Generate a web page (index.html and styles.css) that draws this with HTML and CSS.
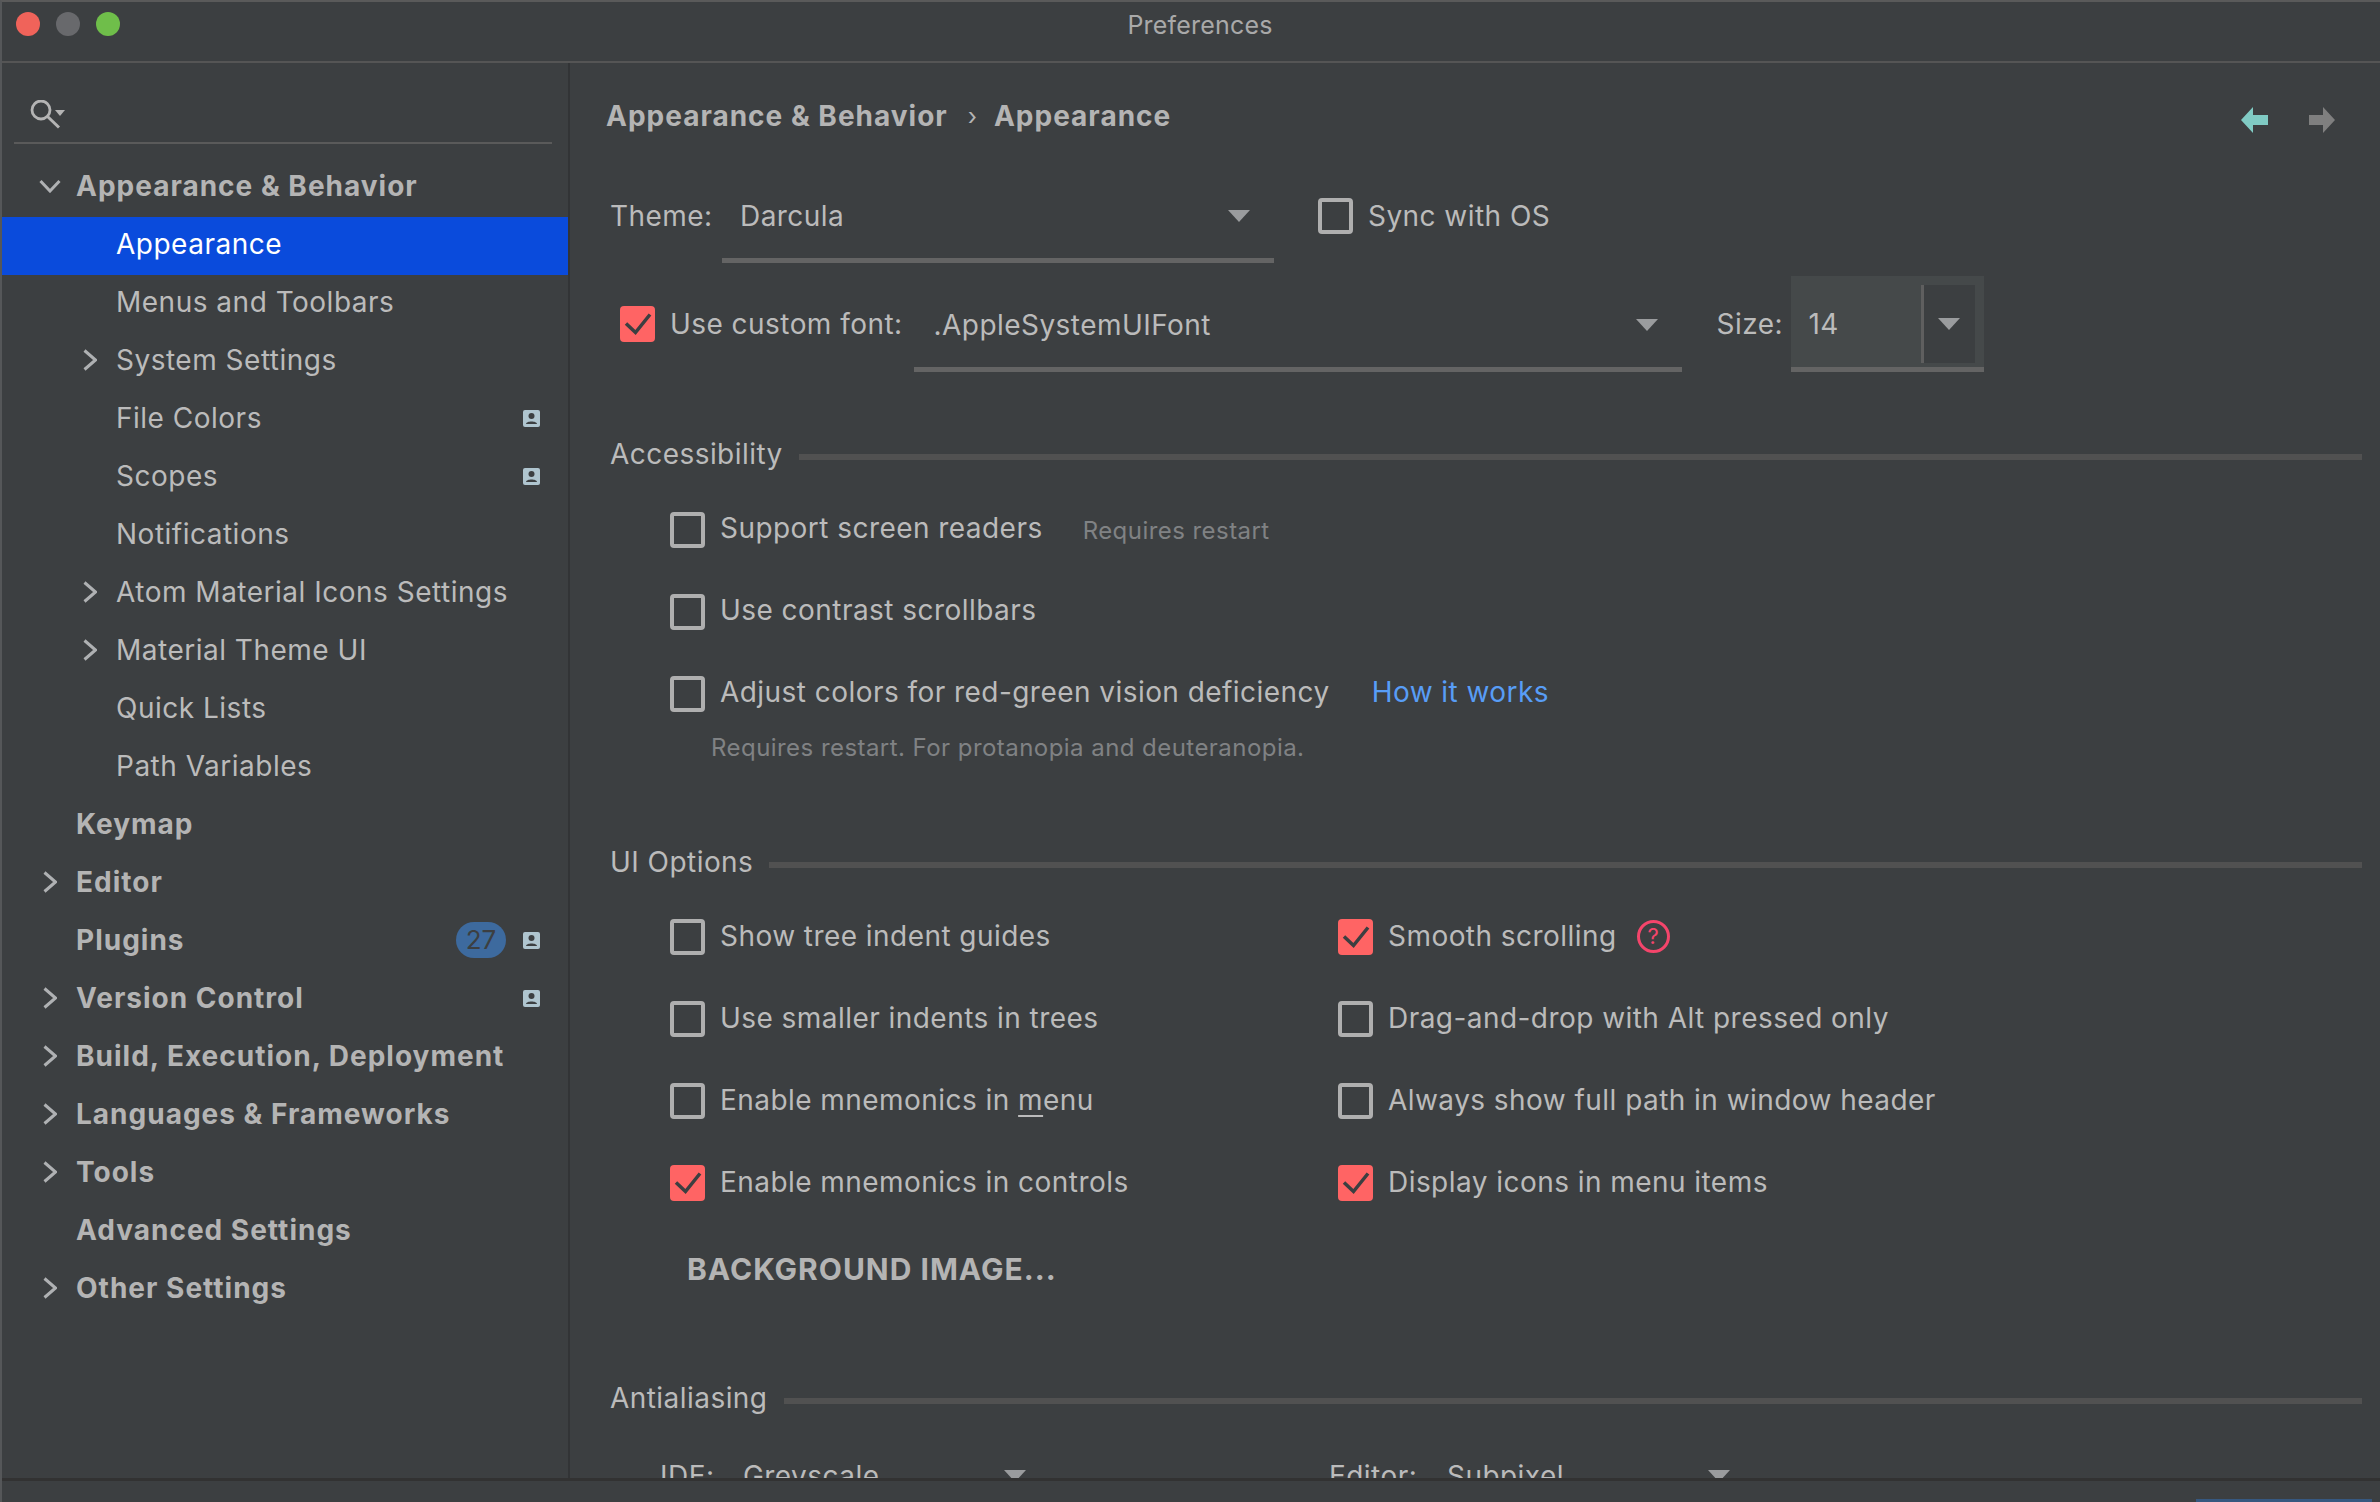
FILE: index.html
```html
<!DOCTYPE html>
<html lang="en">
<head>
    <meta charset="UTF-8">
    <title>Preferences</title>
    <link rel="stylesheet" href="styles.css">
</head>
<body>
    <svg class="defs" width="0" height="0">
        <symbol id="chev-right" viewBox="0 0 14 22"><path d="M1.500 1.500 L12.500 11 L1.500 20.500" fill="none" stroke="currentColor" stroke-width="3"/></symbol>
        <symbol id="chev-down" viewBox="0 0 22 14"><path d="M1.5 2 L11 12 L20.5 2" fill="none" stroke="currentColor" stroke-width="3"/></symbol>
        <symbol id="person" viewBox="0 0 17 17"><rect width="17" height="17" rx="2" fill="#afc5cf"/><circle cx="8.5" cy="6" r="3" fill="#3c3f41"/><path d="M3 14 C3 10.500 14 10.500 14 14 Z" fill="#3c3f41"/></symbol>
        <symbol id="tick" viewBox="0 0 35 36"><path d="M6 17.500 L15.500 26.500 L30 8.500" fill="none" stroke="#3c3f41" stroke-width="3.500"/></symbol>
    </svg>

    <div class="window">
        <div class="titlebar">
            <div class="lights">
                <span class="light red"></span>
                <span class="light grey"></span>
                <span class="light green"></span>
            </div>
            <span class="title">Preferences</span>
        </div>

        <div class="panes">
            <aside class="sidebar">
                <div class="search">
                    <svg width="37" height="30" viewBox="0 0 37 30">
                        <circle cx="12" cy="10" r="9" fill="none" stroke="#b4b4b4" stroke-width="2.800"/>
                        <path d="M18 16 L30 27.500" stroke="#b4b4b4" stroke-width="3"/>
                        <path d="M26 10 H36 L31 16 Z" fill="#b4b4b4"/>
                    </svg>
                </div>
                <ul class="tree">
                    <li class="top"><svg class="chev-d"><use href="#chev-down"/></svg>Appearance &amp; Behavior</li>
                    <li class="sub selected">Appearance</li>
                    <li class="sub">Menus and Toolbars</li>
                    <li class="sub"><svg class="chev"><use href="#chev-right"/></svg>System Settings</li>
                    <li class="sub">File Colors<svg class="person"><use href="#person"/></svg></li>
                    <li class="sub">Scopes<svg class="person"><use href="#person"/></svg></li>
                    <li class="sub">Notifications</li>
                    <li class="sub"><svg class="chev"><use href="#chev-right"/></svg>Atom Material Icons Settings</li>
                    <li class="sub"><svg class="chev"><use href="#chev-right"/></svg>Material Theme UI</li>
                    <li class="sub">Quick Lists</li>
                    <li class="sub">Path Variables</li>
                    <li class="top">Keymap</li>
                    <li class="top"><svg class="chev"><use href="#chev-right"/></svg>Editor</li>
                    <li class="top">Plugins<span class="badge">27</span><svg class="person"><use href="#person"/></svg></li>
                    <li class="top"><svg class="chev"><use href="#chev-right"/></svg>Version Control<svg class="person"><use href="#person"/></svg></li>
                    <li class="top"><svg class="chev"><use href="#chev-right"/></svg>Build, Execution, Deployment</li>
                    <li class="top"><svg class="chev"><use href="#chev-right"/></svg>Languages &amp; Frameworks</li>
                    <li class="top"><svg class="chev"><use href="#chev-right"/></svg>Tools</li>
                    <li class="top">Advanced Settings</li>
                    <li class="top"><svg class="chev"><use href="#chev-right"/></svg>Other Settings</li>
                </ul>
            </aside>

            <main class="content">
                <div class="crumbs">
                    <span>Appearance &amp; Behavior</span>
                    <span class="crumb-sep">›</span>
                    <span>Appearance</span>
                    <div class="nav-arrows">
                        <svg width="27" height="26" viewBox="0 0 27 26"><path d="M0 13 L12 0 V8 H27 V18 H12 V26 Z" fill="#80cbc4"/></svg>
                        <svg width="26" height="26" viewBox="0 0 26 26"><path d="M26 13 L14 0 V8 H0 V18 H14 V26 Z" fill="#7f7f7f"/></svg>
                    </div>
                </div>

                <div class="theme-row">
                    <span class="field-label">Theme:</span>
                    <div class="combo theme-combo"><span>Darcula</span><i class="arrow"></i></div>
                    <label class="check sync"><i class="box"></i>Sync with OS</label>
                </div>

                <div class="font-row">
                    <label class="check"><i class="box on"><svg><use href="#tick"/></svg></i>Use custom font:</label>
                    <div class="combo font-combo"><span>.AppleSystemUIFont</span><i class="arrow"></i></div>
                    <span class="size-label">Size:</span>
                    <div class="size-box">
                        <span class="size-value">14</span>
                        <div class="size-btn"><i class="arrow"></i></div>
                    </div>
                </div>

                <div class="section-head access-head"><span>Accessibility</span><i class="rule"></i></div>
                <div class="checks">
                    <label class="check"><i class="box"></i>Support screen readers<span class="hint">Requires restart</span></label>
                    <label class="check"><i class="box"></i>Use contrast scrollbars</label>
                    <label class="check"><i class="box"></i>Adjust colors for red-green vision deficiency<a class="link">How it works</a></label>
                </div>
                <p class="note">Requires restart. For protanopia and deuteranopia.</p>

                <div class="section-head ui-head"><span>UI Options</span><i class="rule"></i></div>
                <div class="options">
                    <label class="check"><i class="box"></i>Show tree indent guides</label>
                    <label class="check"><i class="box on"><svg><use href="#tick"/></svg></i>Smooth scrolling<span class="help">?</span></label>
                    <label class="check"><i class="box"></i>Use smaller indents in trees</label>
                    <label class="check"><i class="box"></i>Drag-and-drop with Alt pressed only</label>
                    <label class="check"><i class="box"></i><span>Enable mnemonics in <u>m</u>enu</span></label>
                    <label class="check"><i class="box"></i>Always show full path in window header</label>
                    <label class="check"><i class="box on"><svg><use href="#tick"/></svg></i>Enable mnemonics in controls</label>
                    <label class="check"><i class="box on"><svg><use href="#tick"/></svg></i>Display icons in menu items</label>
                </div>
                <div class="bg-button">BACKGROUND IMAGE...</div>

                <div class="section-head aa-head"><span>Antialiasing</span><i class="rule"></i></div>
                <div class="aa-row">
                    <span class="aa-label">IDE:</span><span class="aa-value">Greyscale</span><i class="arrow"></i>
                    <span class="aa-label editor">Editor:</span><span class="aa-value">Subpixel</span><i class="arrow"></i>
                </div>
            </main>
        </div>

        <div class="footer"><div class="ok-button"></div></div>
    </div>
</body>
</html>
```

FILE: styles.css
```css
* {
    box-sizing: border-box;
}

html, body {
    margin: 0;
    height: 100%;
    overflow: hidden;
}

body {
    font-family: Inter, "Noto Sans", sans-serif;
    font-size: 28px;
    color: #bbbbbb;
    background-color: #3c3f41;
}

.defs {
    position: absolute;
}

i {
    display: block;
}

.window {
    height: 1502px;
    display: flex;
    flex-direction: column;
    border-top: 2px solid #5a5a5a;
    border-left: 2px solid #555759;
}

/* title bar */
.titlebar {
    height: 61px;
    flex: none;
    display: flex;
    align-items: center;
    position: relative;
    border-bottom: 2px solid #555555;
    padding-bottom: 16px;
}

.lights {
    display: flex;
    gap: 16px;
    margin-left: 14px;
}

.light {
    width: 24px;
    height: 24px;
    border-radius: 50%;
}

.red { background-color: #f0635a; }
.grey { background-color: #68696c; }
.green { background-color: #6fbe4a; }

.title {
    position: absolute;
    left: 18px;
    right: 0;
    top: 9px;
    text-align: center;
    font-size: 25px;
    line-height: 28px;
    letter-spacing: 0.2px;
    color: #a9a9a9;
}

.panes {
    flex: 1;
    display: flex;
    min-height: 0;
}

/* sidebar */
.sidebar {
    width: 566px;
    flex: none;
    border-right: 2px solid #323436;
    box-sizing: content-box;
}

.search {
    height: 81px;
    margin: 0 16px 0 12px;
    padding: 37px 0 0 15px;
    border-bottom: 2px solid #5a5a5a;
}

.tree {
    list-style: none;
    margin: 15px 0 0;
    padding: 0;
}

.tree li {
    height: 58px;
    display: flex;
    align-items: center;
    position: relative;
    padding-right: 16px;
    padding-bottom: 4px;
    letter-spacing: 0.5px;
}

.tree .top {
    padding-left: 74px;
    font-weight: 700;
    letter-spacing: 1px;
    color: #b4b4b4;
}

.tree .sub {
    padding-left: 114px;
}

.tree .selected {
    background-color: #0a4bdc;
    color: #ffffff;
}

.chev {
    width: 14px;
    height: 22px;
    position: absolute;
    color: #afb1b3;
    left: 41px;
}

.sub .chev {
    left: 81px;
}

.chev-d {
    width: 22px;
    height: 14px;
    position: absolute;
    left: 37px;
    color: #afb1b3;
}

.person {
    width: 17px;
    height: 17px;
    position: absolute;
    left: 521px;
}

.badge {
    position: absolute;
    left: 454px;
    width: 50px;
    height: 36px;
    border-radius: 18px;
    background-color: #3d6a9e;
    color: #3c3f41;
    font-weight: 400;
    font-size: 26px;
    line-height: 36px;
    text-align: center;
    letter-spacing: 0;
}

/* main pane */
.content {
    flex: 1;
    min-width: 0;
    overflow: hidden;
    padding-right: 18px;
    letter-spacing: 0.45px;
}

.crumbs {
    height: 106px;
    display: flex;
    align-items: center;
    padding-left: 36px;
    font-weight: 700;
    letter-spacing: 1px;
    color: #b4b4b4;
}

.crumb-sep {
    margin: 0 16px 0 20px;
    font-weight: 400;
    font-size: 24px;
}

.nav-arrows {
    margin-left: auto;
    display: flex;
    gap: 41px;
    padding-right: 27px;
    padding-top: 8px;
}

.theme-row {
    height: 94px;
    display: flex;
    align-items: center;
    padding-left: 40px;
}

.field-label {
    width: 112px;
}

.combo {
    align-self: flex-end;
    display: flex;
    align-items: center;
    justify-content: space-between;
    border-bottom: 5px solid #646464;
    padding-top: 3px;
}

.theme-combo {
    width: 552px;
    height: 93px;
    padding-left: 18px;
    padding-right: 24px;
}

.arrow {
    width: 0;
    height: 0;
    border-left: 11px solid transparent;
    border-right: 11px solid transparent;
    border-top: 12px solid #9a9c9e;
}

.check {
    display: flex;
    align-items: flex-start;
    height: 36px;
    line-height: 33px;
    white-space: nowrap;
}

.theme-row .check, .font-row .check {
    line-height: 36px;
}

.box {
    width: 35px;
    height: 36px;
    flex: none;
    margin-right: 15px;
    border: 4px solid #afafaf;
    border-radius: 4px;
}

.box.on {
    background-color: #ff6464;
    border: none;
}

.box svg {
    width: 35px;
    height: 36px;
    display: block;
}

.sync {
    margin-left: 44px;
}

.font-row {
    height: 96px;
    margin-top: 13px;
    display: flex;
    align-items: center;
    padding-left: 50px;
}

.font-combo {
    width: 768px;
    height: 92px;
    margin-left: 11px;
    padding-left: 20px;
    padding-right: 24px;
}

.size-label {
    margin-left: 35px;
    width: 74px;
}

.size-box {
    align-self: stretch;
    width: 193px;
    background-color: #45494a;
    border-bottom: 5px solid #646464;
    display: flex;
    align-items: center;
    justify-content: space-between;
    padding: 9px 9px 4px 18px;
}

.size-btn {
    width: 54px;
    align-self: stretch;
    background-color: #3c3f41;
    border-left: 3px solid #5f5f5f;
    display: flex;
    align-items: center;
    justify-content: center;
}

.section-head {
    height: 40px;
    display: flex;
    align-items: center;
    padding-left: 40px;
}

.rule {
    flex: 1;
    height: 6px;
    margin-top: 6px;
    margin-left: 16px;
    background-color: #515151;
}

.access-head {
    margin-top: 62px;
}

.checks {
    margin-top: 38px;
    padding-left: 100px;
    display: flex;
    flex-direction: column;
    gap: 46px;
}

.hint {
    margin-left: 40px;
    margin-top: 2px;
    font-size: 24px;
    color: #808284;
}

.link {
    margin-left: 42px;
    color: #589df6;
}

.note {
    margin: 16px 0 0 141px;
    height: 40px;
    line-height: 40px;
    font-size: 24px;
    color: #808284;
}

.ui-head {
    margin-top: 74px;
}

.options {
    margin-top: 37px;
    padding-left: 100px;
    display: grid;
    grid-template-columns: 668px 1fr;
    row-gap: 46px;
}

.options .check {
    line-height: 35px;
}

.options u {
    text-underline-offset: 5px;
    text-decoration-thickness: 2px;
}

.help {
    width: 33px;
    height: 33px;
    margin-left: 20px;
    margin-top: 1px;
    border: 3px solid #f4456b;
    border-radius: 50%;
    color: #f4456b;
    font-size: 22px;
    line-height: 27px;
    text-align: center;
    letter-spacing: 0;
}

.bg-button {
    margin: 48px 0 0 117px;
    height: 40px;
    line-height: 40px;
    font-size: 30px;
    font-weight: 700;
    color: #b4b4b4;
    letter-spacing: 1px;
}

.aa-head {
    margin-top: 89px;
}

.aa-row {
    margin-top: 38px;
    height: 40px;
    display: flex;
    align-items: center;
    padding-left: 90px;
}

.aa-label {
    width: 83px;
}

.aa-label.editor {
    width: 118px;
    margin-left: 303px;
}

.aa-value {
    width: 261px;
}

/* footer */
.footer {
    height: 24px;
    flex: none;
    border-top: 3px solid #323232;
    padding: 18px 8px 0 0;
    display: flex;
    justify-content: flex-end;
    overflow: hidden;
}

.ok-button {
    width: 176px;
    height: 40px;
    background-color: #365880;
}
```
